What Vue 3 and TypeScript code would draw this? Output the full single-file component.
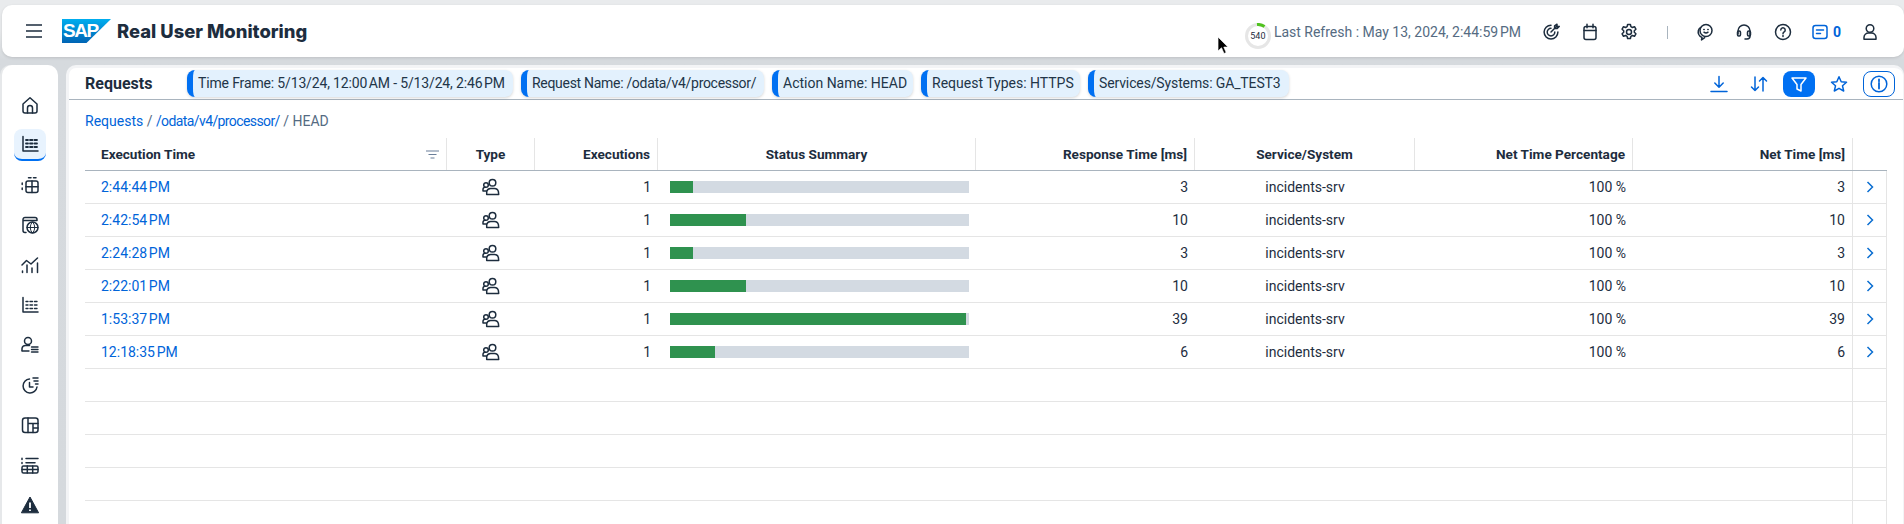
<script setup lang="ts">
interface Row {
  time: string
  response: number
  pct: number
}

const columns = [
  { label: 'Execution Time', cls: 'left', sort: true },
  { label: 'Type', cls: 'center' },
  { label: 'Executions', cls: 'right' },
  { label: 'Status Summary', cls: 'center' },
  { label: 'Response Time [ms]', cls: 'right' },
  { label: 'Service/System', cls: 'center' },
  { label: 'Net Time Percentage', cls: 'right' },
  { label: 'Net Time [ms]', cls: 'right' },
  { label: '', cls: 'center' },
]

const rows: Row[] = [
  { time: '2:44:44\u202fPM', response: 3, pct: 7.7 },
  { time: '2:42:54\u202fPM', response: 10, pct: 25.5 },
  { time: '2:24:28\u202fPM', response: 3, pct: 7.7 },
  { time: '2:22:01\u202fPM', response: 10, pct: 25.5 },
  { time: '1:53:37\u202fPM', response: 39, pct: 99 },
  { time: '12:18:35\u202fPM', response: 6, pct: 15.2 },
]

// spacing evens out the narrower slashes of the original font
const chips = [
  { text: 'Time Frame: 5/13/24, 12:00\u202fAM - 5/13/24, 2:46\u202fPM', width: 326, spacing: -0.15 },
  { text: 'Request Name: /odata/v4/processor/', width: 243, spacing: -0.3 },
  { text: 'Action Name: HEAD', width: 141, spacing: 0 },
  { text: 'Request Types: HTTPS', width: 159, spacing: 0 },
  { text: 'Services/Systems: GA_TEST3', width: 201, spacing: -0.13 },
]
</script>

<template>
  <div class="page">
    <svg class="cursor" width="14" height="20" viewBox="0 0 14 20"><path d="M1 1v14l3.5-3.2L7 17.5l2.2-1-2.4-5.4H11z" fill="#000" stroke="#fff" stroke-width=".7" /></svg>

    <header class="topbar">
      <div class="brand">
        <svg class="burger" width="16" height="14" viewBox="0 0 16 14"><path d="M0 1h16M0 7h16M0 13h16" stroke="#1d2d3e" stroke-width="1.3" /></svg>
        <div class="logo"><span>SAP</span></div>
        <span class="app-title">Real User Monitoring</span>
      </div>
      <div class="top-actions">
        <div class="gauge">
          <svg width="26" height="26" viewBox="0 0 26 26">
            <circle cx="13" cy="13" r="11.5" fill="none" stroke="#e6e6e6" stroke-width="3" />
            <path d="M12 1.500a11.500 11.500 0 0 1 7.500 2" fill="none" stroke="#4fc21e" stroke-width="3" />
          </svg>
          <span class="gauge-num">540</span>
        </div>
        <span class="refresh">Last Refresh : May 13, 2024, 2:44:59&#8239;PM</span>
        <svg class="ico i-target" viewBox="0 0 18 18"><path d="M9 2.200a6.900 6.900 0 1 0 6.900 6.900M9 5.300a3.800 3.800 0 1 0 3.800 3.800M9 9l6-6M12.600 2.800v2.600h2.600l2-2h-2.200V1.200z" /></svg>
        <svg class="ico i-cal" viewBox="0 0 18 18"><rect x="3" y="3.500" width="12" height="13" rx="2" /><path d="M3 7.500h12M6 1.200v3.600M12 1.200v3.600" /></svg>
        <svg class="ico i-gear" viewBox="0 0 18 18"><circle cx="9" cy="9" r="2.500" /><path d="M7.600 1.500h2.800l.5 2.200 1.500.8 2.100-.8 1.400 2.500-1.600 1.500v1.600l1.600 1.500-1.400 2.500-2.100-.8-1.500.8-.5 2.200H7.600l-.5-2.200-1.500-.8-2.100.8-1.400-2.500 1.600-1.500V7.700L2.100 6.200l1.400-2.500 2.100.8 1.500-.8z" /></svg>
        <span class="divider"></span>
        <svg class="ico i-chat" viewBox="0 0 18 18"><circle cx="10" cy="7.500" r="6" /><path d="M4.500 4.500C2.500 6 1.800 9 2.800 11.500c.6 1.400 1.800 2.400 3.200 2.900l-.5 2.600 3.200-2.300" /><path d="M7.800 6.500h.4M11.800 6.500h.4M8 9.200c1.200 1 2.800 1 4 0" /></svg>
        <svg class="ico i-head" viewBox="0 0 18 18"><path d="M3 11V8a6 6 0 0 1 12 0v3M15 11v2a3 3 0 0 1-3 3h-2" /><rect x="2.500" y="8" width="3" height="5" rx="1.200" /><rect x="12.500" y="8" width="3" height="5" rx="1.200" /></svg>
        <svg class="ico i-help" viewBox="0 0 18 18"><circle cx="9" cy="9" r="7.500" /><path d="M6.800 7a2.200 2.200 0 1 1 3.400 1.900c-.8.500-1.200 1-1.200 1.900M9 12.600v.9" /></svg>
        <svg class="ico i-msg blue" viewBox="0 0 18 18"><rect x="2" y="2.500" width="14" height="13" rx="2.500" /><path d="M5.500 7h7M5.500 10.500h4" /></svg>
        <span class="msg-count">0</span>
        <svg class="ico i-user" viewBox="0 0 18 18"><circle cx="9" cy="5.500" r="3.800" /><path d="M3 16.200v-2a4.500 4.500 0 0 1 4.500-4.200h3a4.500 4.500 0 0 1 4.500 4.200v2z" /></svg>
      </div>
    </header>

    <div class="body">
      <nav class="sidebar">
        <div class="nav-item"><svg class="ico" viewBox="0 0 18 18"><path d="M2 8l7-6.200L16 8v7a2 2 0 0 1-2 2H4a2 2 0 0 1-2-2z" /><path d="M6.500 17v-5a2.500 2.500 0 0 1 5 0v5" /></svg></div>
        <div class="nav-item active"><svg class="ico" viewBox="0 0 18 18"><path d="M2 1.500V16h15" /><path d="M5 5h2M9 5h2.500M13.500 5H16M5 8.500h2M9 8.500h2.500M13.500 8.500H16M5 12h2M9 12h2.500M13.500 12H16" stroke-width="1.800" /></svg></div>
        <div class="nav-item"><svg class="ico" viewBox="0 0 18 18"><rect x="5" y="5" width="12" height="11.500" rx="2" /><path d="M5 10.700h12M11 5v11.500M7.500 1.800h2.500M12.500 1.800H15M1.200 7v1.500M1.200 12v1.500" stroke-width="1.500" /></svg></div>
        <div class="nav-item"><svg class="ico" viewBox="0 0 18 18"><path d="M2 12V3.500A2 2 0 0 1 4 1.500h10a2 2 0 0 1 2 2v1H2M2 12v2.500a2 2 0 0 0 2 2h1" /><circle cx="11.500" cy="11.500" r="5.500" /><path d="M6 11.500h11M11.500 6c-3 3-3 8 0 11M11.500 6c3 3 3 8 0 11" stroke-width="1" /></svg></div>
        <div class="nav-item"><svg class="ico" viewBox="0 0 18 18"><path d="M1 9l4.500-4.500L10 8l6.500-6" /><path d="M1.500 15v1.500M6 9v7.500M11 12v4.500M16.500 7v9.500" /></svg></div>
        <div class="nav-item"><svg class="ico" viewBox="0 0 18 18"><path d="M2 1.500V16h15" /><path d="M5 5.500h2M9 5.500h2.500M13.500 5.500H16M5 9h2M9 9h2.500M13.500 9H16M5 12.500h2M9 12.500h2.500M13.500 12.500H16" stroke-width="1.400" /></svg></div>
        <div class="nav-item"><svg class="ico" viewBox="0 0 18 18"><circle cx="7" cy="5" r="3.500" /><path d="M1 14.500v-2A3.500 3.500 0 0 1 4.500 9.500h4" /><path d="M1 15h7M10.500 11h6.500M10.500 13.500h6.500M10.500 16h6.500" stroke-width="1.400" /></svg></div>
        <div class="nav-item"><svg class="ico" viewBox="0 0 18 18"><path d="M8.500 3a7 7 0 1 0 7.500 8" /><path d="M8.500 6.500V11h3.500M12 2h5M13 5h4M14.500 8H17" /></svg></div>
        <div class="nav-item"><svg class="ico" viewBox="0 0 18 18"><rect x="1.500" y="2" width="15.500" height="14.500" rx="2.500" /><path d="M7 2v14.500M7 7.500h10M12 7.500v9M12 12h5" /></svg></div>
        <div class="nav-item"><svg class="ico" viewBox="0 0 18 18"><path d="M1 2.200v1.300M5 2.600h12M1 6.500v1M5 6.800h9" /><rect x="1" y="10" width="16" height="7" rx="1.500" /><path d="M1 13.500h16M6.300 10v7M11.700 10v7" /></svg></div>
        <div class="nav-item"><svg width="18" height="18" viewBox="0 0 18 18"><path d="M9 1L.4 16.800h17.200z" fill="#1d2d3e" stroke="#1d2d3e" stroke-linejoin="round" /><path d="M9 6.500v5.500M9 13.500v1.500" stroke="#fff" stroke-width="1.800" /></svg></div>
      </nav>

      <main class="panel">
        <div class="panel-head">
          <span class="panel-title">Requests</span>
          <div class="chips">
            <span
              v-for="c in chips"
              :key="c.text"
              class="chip"
              :style="{ width: c.width + 'px', letterSpacing: c.spacing + 'px' }"
            >{{ c.text }}</span>
          </div>
          <div class="tools">
            <button class="tool"><svg class="ico blue" viewBox="0 0 18 18"><path d="M9 1.500v10.500M4.800 8L9 12.200 13.200 8M1 16.500h16" /></svg></button>
            <button class="tool"><svg class="ico blue" viewBox="0 0 18 18"><path d="M5 2v13.500M1.500 12L5 15.500 8.500 12M13 16V2.500M9.500 6L13 2.500 16.500 6" /></svg></button>
            <button class="tool on"><svg class="ico" viewBox="0 0 18 18"><path d="M2 3h14l-5 6.500V16l-4-2V9.500z" stroke="#fff" /></svg></button>
            <button class="tool"><svg class="ico blue" viewBox="0 0 18 18"><path d="M9 1.800l2.200 4.900 5.300.6-4 3.500 1.200 5.200L9 13.300 4.300 16l1.200-5.200-4-3.500 5.300-.6z" /></svg></button>
            <button class="tool boxed"><svg class="ico blue" viewBox="0 0 18 18"><circle cx="9" cy="9" r="7.800" /><path d="M9 8v5.500" stroke-width="1.800" /><path d="M9 4.500v1.800" stroke-width="1.800" /></svg></button>
          </div>
        </div>

        <div class="crumbs">
          <a>Requests</a> / <a class="path">/odata/v4/processor/</a> <span class="current">/ HEAD</span>
        </div>

        <div class="grid">
          <div class="grid-row head">
            <div v-for="col in columns" :key="col.label" class="cell" :class="col.cls">
              {{ col.label }}
              <svg v-if="col.sort" class="sort" width="13" height="9" viewBox="0 0 13 9"><path d="M0 1h13M2.500 4.500h8M4.500 8h4" stroke="#6a7f9a" stroke-width="1.100" /></svg>
            </div>
          </div>
          <div v-for="r in rows" :key="r.time" class="grid-row">
            <div class="cell left link">{{ r.time }}</div>
            <div class="cell center">
              <svg class="ico people" viewBox="0 0 18 18"><circle cx="10.500" cy="4.700" r="3.300" /><circle cx="4" cy="7" r="2.300" /><path d="M4.700 16.500h12l-.3-2.800a4 4 0 0 0-4-3.300h-3.800a4 4 0 0 0-3.900 3.300zM4.500 13H1v-1.800a2.200 2.200 0 0 1 2.200-2" /></svg>
            </div>
            <div class="cell right">1</div>
            <div class="cell bar-cell">
              <div class="bar"><div class="bar-fill" :style="{ width: r.pct + '%' }"></div></div>
            </div>
            <div class="cell right">{{ r.response }}</div>
            <div class="cell center">incidents-srv</div>
            <div class="cell right">100 %</div>
            <div class="cell right">{{ r.response }}</div>
            <div class="cell center">
              <svg width="8" height="12" viewBox="0 0 8 12"><path d="M1.500 1l5 5-5 5" fill="none" stroke="#0a6ed1" stroke-width="1.500" /></svg>
            </div>
          </div>
          <div v-for="n in 5" :key="n" class="grid-row">
            <div v-for="m in 9" :key="m" class="cell"></div>
          </div>
        </div>
      </main>
    </div>
  </div>
</template>

<style scoped>
.page {
  position: relative;
  height: 524px;
  overflow: hidden;
  background: linear-gradient(#e9ebed 0, #e9ebed 30px, #d6dade 60px, #d5d9dd 100%);
  font-family: Roboto, "Liberation Sans", sans-serif;
  font-size: 14px;
  color: #1d2d3e;
  box-sizing: border-box;
}
.cursor { position: absolute; left: 1217px; top: 36px; z-index: 5; }

.ico {
  width: 18px;
  height: 18px;
  fill: none;
  stroke: #1d2d3e;
  stroke-width: 1.500;
  stroke-linejoin: round;
  stroke-linecap: round;
  flex: none;
}
.ico.blue { stroke: #0064d9; }

.topbar {
  display: flex;
  align-items: center;
  justify-content: space-between;
  height: 52px;
  margin: 5px 0 8px 2px;
  background: #fff;
  border-radius: 10px;
  box-shadow: 0 1px 3px rgba(0, 0, 0, 0.12);
}
.brand { display: flex; align-items: center; }
.burger { margin-left: 24px; }
.logo {
  width: 49px;
  height: 24px;
  margin-left: 20px;
  background: linear-gradient(180deg, #00aeef, #0064b4);
  clip-path: polygon(0 0, 100% 0, 50% 100%, 0 100%);
  display: flex;
  align-items: center;
}
.logo span {
  color: #fff;
  font-size: 19px;
  font-weight: 700;
  letter-spacing: -1.500px;
  margin-left: 1px;
  font-family: "Liberation Sans", sans-serif;
}
.app-title { margin-left: 6px; font-family: Inter, sans-serif; font-size: 18.400px; font-weight: 800; }

.top-actions { display: flex; align-items: center; padding: 2px 25px 0 0; }
.gauge {
  position: relative;
  width: 26px;
  height: 26px;
  margin: 8px 3px 0 0;
}
.gauge-num {
  position: absolute;
  inset: 0;
  display: flex;
  align-items: center;
  justify-content: center;
  font-size: 9px;
}
.refresh { color: #556b82; margin-right: 21px; }
.top-actions .ico { margin-right: 21px; }
.divider { width: 1px; height: 13px; background: #a9b4be; margin: 0 28px 0 8px; }
.top-actions .i-help { margin-right: 19px; }
.top-actions .i-msg { margin-right: 4px; }
.msg-count { color: #0064d9; font-weight: 700; margin-right: 20px; }
.top-actions .i-user { margin-right: 0; }

.body { display: flex; gap: 8px; height: 459px; }
.sidebar {
  width: 56px;
  margin-left: 2px;
  background: #fff;
  border-radius: 10px 10px 0 0;
  padding-top: 24px;
  display: flex;
  flex-direction: column;
  align-items: center;
  flex: none;
  box-shadow: -2px 0 0 #e6e8ea;
}
.nav-item {
  width: 32px;
  height: 32px;
  margin-bottom: 8px;
  display: flex;
  align-items: center;
  justify-content: center;
  border-radius: 8px;
  flex: none;
  box-sizing: border-box;
}
.nav-item.active { background: #e8f3fe; border-bottom: 2px solid #0070f2; }

.panel {
  flex: 1;
  min-width: 0;
  background: #fff;
  border-radius: 10px 10px 0 0;
  border: 3px solid #f3f4f6;
  border-right-width: 1px;
  border-bottom: 0;
  box-sizing: border-box;
}
.panel-head {
  display: flex;
  align-items: center;
  height: 31px;
  border-bottom: 1px solid #a9b4be;
  padding-left: 16px;
}
.panel-title { font-size: 16px; font-weight: 700; width: 102px; flex: none; }
.chips { display: flex; gap: 8px; flex: 1; }
.chip {
  height: 27px;
  line-height: 27px;
  background: #e3f1fd;
  border-left: 6px solid #0070f2;
  border-radius: 8px;
  padding: 0 0 0 5px;
  white-space: nowrap;
  box-shadow: 0 1px 3px rgba(0, 0, 0, 0.16);
  color: #223548;
  box-sizing: border-box;
  flex: none;
}
.tools { display: flex; align-items: center; gap: 8px; margin-right: 8px; }
.tool {
  width: 32px;
  height: 26px;
  border: 1px solid transparent;
  border-radius: 8px;
  background: none;
  padding: 0;
  display: flex;
  align-items: center;
  justify-content: center;
  box-sizing: border-box;
}
.tool.on { background: #0070f2; }
.tool.boxed { border-color: #0064d9; }

.crumbs { height: 38px; line-height: 43px; padding-left: 16px; color: #556b82; }
.crumbs a { color: #0064d9; }
.crumbs .path { letter-spacing: -0.6px; }

.grid { margin-left: 16px; width: 1802px; }
.grid-row {
  display: grid;
  grid-template-columns: 362px 88px 123px 318px 219px 220px 218px 220px 34px;
  height: 33px;
  border-bottom: 1px solid #e5e5e5;
  box-sizing: border-box;
}
.grid-row.head {
  border-bottom: 1px solid #a9b4be;
  font-weight: 700;
  font-size: 13.600px;
}
.cell {
  display: flex;
  align-items: center;
  padding: 0 7px;
  box-sizing: border-box;
  white-space: nowrap;
}
.head .cell { border-right: 1px solid #e5e5e5; }
.head .cell:last-child { border-right: 0; }
.grid-row:not(.head) .cell:nth-child(8),
.grid-row:not(.head) .cell:nth-child(9) { border-right: 1px solid #e5e5e5; }
.left { padding-left: 16px; }
.right { justify-content: flex-end; }
.center { justify-content: center; }
.link { color: #0064d9; }
.sort { margin-left: auto; }
.bar-cell { padding: 0 12px; }
.bar { width: 299px; height: 12px; background: #d3dae2; flex: none; }
.bar-fill { height: 100%; background: #2f924f; }
</style>
